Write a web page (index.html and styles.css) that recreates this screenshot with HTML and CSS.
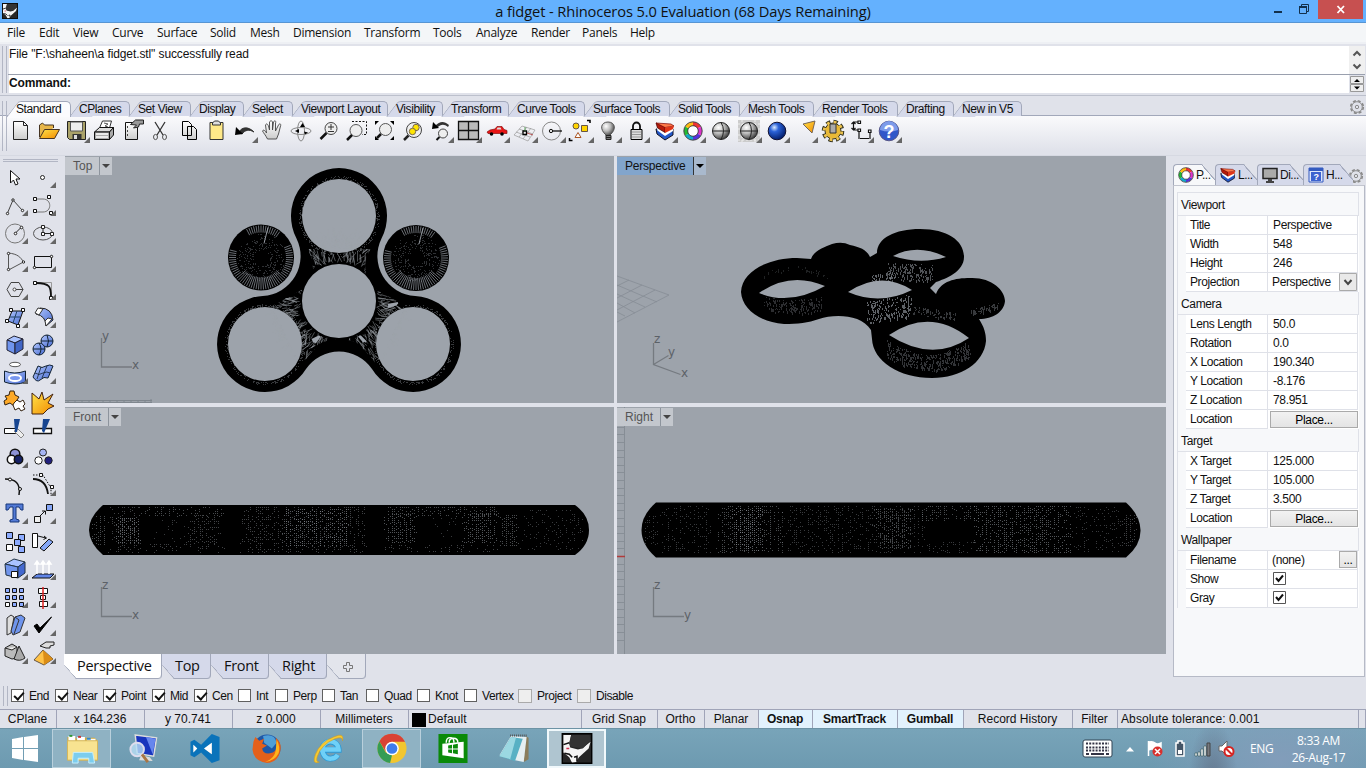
FILE: index.html
```html
<!DOCTYPE html>
<html lang="en">
<head>
<meta charset="utf-8">
<title>a fidget - Rhinoceros 5.0 Evaluation</title>
<link rel="stylesheet" href="styles.css">
</head>
<body>
<svg class="defs" width="0" height="0">
<defs>
<linearGradient id="gy" x1="0" y1="0" x2="0" y2="1"><stop offset="0" stop-color="#fff"/><stop offset="1" stop-color="#ccc"/></linearGradient>
<linearGradient id="bl" x1="0" y1="0" x2="1" y2="1"><stop offset="0" stop-color="#b4c9ff"/><stop offset="1" stop-color="#4468cf"/></linearGradient>
<linearGradient id="or" x1="0" y1="0" x2="1" y2="1"><stop offset="0" stop-color="#ffe34a"/><stop offset="1" stop-color="#f28a00"/></linearGradient>
<radialGradient id="ball" cx=".35" cy=".3" r=".7"><stop offset="0" stop-color="#fff"/><stop offset=".5" stop-color="#bbb"/><stop offset="1" stop-color="#444"/></radialGradient>
<radialGradient id="blue" cx=".35" cy=".3" r=".7"><stop offset="0" stop-color="#d9eaff"/><stop offset=".35" stop-color="#2b62d8"/><stop offset="1" stop-color="#04206f"/></radialGradient>
<symbol id="wheel" viewBox="0 0 20 20"><g fill="none" stroke-width="4"><path stroke="#e33" d="M10 3A7 7 0 0 1 16 6.5"/><path stroke="#d3c" d="M16 6.5A7 7 0 0 1 16 13.5"/><path stroke="#53d" d="M16 13.5A7 7 0 0 1 10 17"/><path stroke="#1ac" d="M10 17A7 7 0 0 1 4 13.5"/><path stroke="#2b3" d="M4 13.5A7 7 0 0 1 4 6.5"/><path stroke="#fb1" d="M4 6.5A7 7 0 0 1 10 3"/></g><g fill="none" stroke="#333" stroke-width=".9"><circle cx="10" cy="10" r="9.2"/><circle cx="10" cy="10" r="5.3" fill="#fff"/></g></symbol>
<symbol id="layer" viewBox="0 0 20 20"><path d="M1 8l1 5 8 6 8-5V8z" fill="#2458c8" stroke="#112"/><path d="M1.500 6l1 3.500L10 15l8-5V7z" fill="#fff"/><path d="M1 2l1.500 5L10 11.500V6z" fill="#b51a0a" stroke="#400" stroke-width=".7"/><path d="M1 2l9 4.500L19 5l-3-2z" fill="#ff7b4a" stroke="#700" stroke-width=".7"/><path d="M10 6.500L19 5l-1 3-8 4z" fill="#e03517"/></symbol>
<symbol id="gear" viewBox="0 0 16 16"><g fill="none" stroke="#8a8a8a"><circle cx="8" cy="8" r="6.3" stroke-width="1.6" stroke-dasharray="3 1.95"/><circle cx="8" cy="8" r="5.3"/><circle cx="8" cy="8" r="1.7"/></g></symbol>
<symbol id="rhino" viewBox="0 0 32 32"><path d="M0 0h32v32H0z" fill="#262626"/><path d="M2 2h8l-2 9 1 4 8 2 4-1 9-7-2 7-10 9-3 5-4 1-3-6-6-5z" fill="#f4f4f4"/><path d="M10 2h19l1 6-8 8-6-1-7-1-1-4z" fill="#333"/><path d="M2 12l6-2M3 21l5 1 3 3M13 25l3-1v5" fill="none" stroke="#111" stroke-width="1.600"/><path d="M5 16h3" stroke="#d03050" stroke-width="1.500"/><path d="M.7.7h30.6v30.6H.7z" fill="none" stroke="#000" stroke-width="1.5"/></symbol>
</defs>
</svg>
<div class="window">
<header class="titlebar">
  <svg class="appicon" viewBox="0 0 32 32"><use href="#rhino"/></svg>
  <h1>a fidget - Rhinoceros 5.0 Evaluation (68 Days Remaining)</h1>
  <div class="winbtns"><svg width="64" height="22"><path d="M4 12h8" stroke="#12304c" stroke-width="2"/><path d="M29.5 6.500h7v7h-7zM31.500 6v-1.500h7v7h-1.500" fill="none" stroke="#12304c"/><path d="M29 7h8" stroke="#12304c" stroke-width="2"/></svg><span class="close"><svg width="44" height="19"><path d="M19.500 6l6.500 7M26 6l-6.500 7" stroke="#fff" stroke-width="1.800"/></svg></span></div>
</header>
<nav class="menu"><span>File</span><span>Edit</span><span>View</span><span>Curve</span><span>Surface</span><span>Solid</span><span>Mesh</span><span>Dimension</span><span>Transform</span><span>Tools</span><span>Analyze</span><span>Render</span><span>Panels</span><span>Help</span></nav>
<section class="command">
  <div class="lines"><div class="history">File "F:\shaheen\a fidget.stl" successfully read</div><div class="prompt">Command:</div></div>
  <svg class="cmdscroll" width="16" height="48"><path d="M0 0h16v28H0z" fill="#f0f0f0"/><path d="M4.500 9.500l3.500-3.500 3.500 3.500M4.500 18.500l3.500 3.500 3.500-3.500" fill="none" stroke="#555" stroke-width="2"/><path d="M0 28.500h16" stroke="#9aa0ae"/><path d="M1.500 30.500h13v7h-13zM1.500 38.500h13v7h-13z" fill="#eee" stroke="#999"/><path d="M5 36h6l-3-3zM5 40.500h6l-3 3z"/></svg>
</section>
<section class="tooltabs">
  <div class="tabs">
  <span class="tab on"><b>Standard</b></span><span class="tab"><b>CPlanes</b></span><span class="tab"><b>Set View</b></span><span class="tab"><b>Display</b></span><span class="tab"><b>Select</b></span><span class="tab"><b>Viewport Layout</b></span><span class="tab"><b>Visibility</b></span><span class="tab"><b>Transform</b></span><span class="tab"><b>Curve Tools</b></span><span class="tab"><b>Surface Tools</b></span><span class="tab"><b>Solid Tools</b></span><span class="tab"><b>Mesh Tools</b></span><span class="tab"><b>Render Tools</b></span><span class="tab"><b>Drafting</b></span><span class="tab"><b>New in V5</b></span>
  </div>
  <svg class="gear" width="16" height="16"><use href="#gear"/></svg>
</section>
<section class="toolbar">
<i><svg><path d="M7.500 3.500h10l4 4v14h-14z" fill="url(#gy)" stroke="#222"/><path d="M17.500 3.500v4h4" fill="none" stroke="#222"/></svg></i>
<i><svg><path d="M5.500 19V7l3-2 2 2h9v3" fill="#e7b64a" stroke="#432"/><path d="M5.500 20.500l5-9h15l-5 9z" fill="url(#or)" stroke="#432"/></svg></i>
<i class="m"><svg><path d="M5.500 3.500h18v18h-16l-2-2z" fill="#aaa269" stroke="#222"/><path d="M8.500 4h12v9h-12z" fill="#eee" stroke="#555"/><path d="M10.500 16h9v5h-9z" fill="#333"/><path d="M12 17h3v4h-3z" fill="#ddd"/></svg></i>
<i><svg><path d="M9.500 10l3-7h9l-2 7" fill="#fff" stroke="#333"/><path d="M14 5l4 1-3 2 3 1" fill="none" stroke="#555"/><path d="M4.500 14l5-4.500h14l-4 4.500z" fill="#ddd" stroke="#111"/><path d="M4.500 14h15v7.500h-15zM19.500 14l4-4.500v7.500l-4 4.500z" fill="#aaa" stroke="#111"/><path d="M6 16h12M6 19h12" stroke="#fff" stroke-width="1.300"/></svg></i>
<i><svg><path d="M7.500 4.500h12v17h-12z" fill="url(#gy)" stroke="#111"/><path d="M9 9h1M9 13h1M9 17h1" stroke="#111" stroke-width="1.500"/><path d="M12.500 6.500l5-4.500h8v4h-4l-1 3-5 1 3-3z" fill="#999" stroke="#222"/></svg></i>
<i><svg fill="none"><path d="M9 4l8 13M19 4l-8 13" stroke="#333" stroke-width="1.300"/><ellipse cx="9.500" cy="19" rx="2" ry="2.600" stroke="#555"/><ellipse cx="18.500" cy="19" rx="2" ry="2.600" stroke="#555"/></svg></i>
<i><svg><path d="M8.500 3.500h6l3 3v11h-9zM13.500 8.500h6l3 3v10h-9z" fill="url(#gy)" stroke="#000"/></svg></i>
<i><svg><path d="M8 4.500h13v17H8z" fill="#ffe989" stroke="#333"/><path d="M10.500 5l2-2h4l2 2v2h-8z" fill="#ddd" stroke="#333"/></svg></i>
<i class="m"><svg><path d="M9 14c3-5 9-6 15 0-5-3-9-2-12 2z" fill="#333" stroke="#333"/><path d="M5 17l1-8 7 7z"/></svg></i>
<i><svg><path d="M9.500 21c-2-4-4-6-5-8 1-2 3 0 4 2L7.500 7c1-2 2-1 3 1l1 4V4c1-2 3-1 3 0v8l1-8c1-2 3-1 2 1v8l3-6c1-2 3-1 2 1l-2 8-2 5z" fill="url(#gy)" stroke="#444" stroke-width=".9"/></svg></i>
<i><svg fill="none" stroke="#888"><ellipse cx="15" cy="13" rx="10" ry="3.500"/><ellipse cx="15" cy="13" rx="3.500" ry="10"/><path d="M14 9h5l-2.500-4zM13 11v4l-4-2zM18 13.500l4 1-3 2z" fill="#000" stroke="none"/></svg></i>
<i><svg><circle cx="17" cy="10.500" r="6" fill="#eee" stroke="#444"/><path d="M14 9h6M17 6v6M14 13.500h6" stroke="#333"/><path d="M12.500 15L6.500 21" stroke="#111" stroke-width="2.500"/></svg></i>
<i><svg><path d="M10 3.500h14.500v13H20" fill="none" stroke="#111" stroke-dasharray="2 1.500"/><circle cx="14" cy="12.500" r="6" fill="#eeec" stroke="#555"/><path d="M10 17l-5 5" stroke="#111" stroke-width="2.500"/></svg></i>
<i><svg><path d="M5 7V3h4zM20 3h4v4zM5 18v4h4zM20 22h4v-4z"/><circle cx="15.500" cy="11.500" r="6" fill="#eee" stroke="#555"/><path d="M11 16l-4 4" stroke="#111" stroke-width="2.500"/></svg></i>
<i><svg><circle cx="16" cy="12" r="7.500" fill="#eee" stroke="#444"/><circle cx="18" cy="9.500" r="3.200" fill="#ffe500" stroke="#765"/><circle cx="14.500" cy="13.500" r="3.200" fill="#ffe500" stroke="#765"/><path d="M10.500 17.500L6 22" stroke="#222" stroke-width="2.500"/></svg></i>
<i class="m"><svg><path d="M9 8c5-5 9-5 14-1l-1 2c-4-3-7-3-11 1z" fill="#333"/><path d="M6 11l1-7 6 6z"/><circle cx="17" cy="15.500" r="4.500" fill="#eee" stroke="#444"/><path d="M13.500 19l-3 3" stroke="#111" stroke-width="2"/></svg></i>
<i class="m"><svg><path d="M4.500 3.500h20v18h-20zM4.500 12.500h20M14.500 4v18" fill="#bbb" stroke="#111" stroke-width="1.300"/></svg></i>
<i class="m"><svg><path d="M5 14l3-2 5-1 2-2.500h5l2 3 3 1v3H6z" fill="#e81414" stroke="#811" stroke-width=".7"/><circle cx="9.500" cy="16" r="1.800"/><circle cx="20" cy="16" r="1.800"/><path d="M15.500 9.500h3l1 2h-5z" fill="#ddd"/></svg></i>
<i class="m"><svg fill="none" stroke="#999" stroke-width=".7"><path d="M4 17l8-9 13 4-7 11zM6 14l14 5M9 11l14 5M9 19l8-10M13 21l8-11"/><path d="M13 13h3.500v3.500H13z" fill="#eee" stroke="#000" stroke-width="1.300"/><path d="M17 15l6 2" stroke="#a22"/><path d="M15 13V9" stroke="#282"/></svg></i>
<i class="m"><svg><circle cx="13.500" cy="13" r="9" fill="none" stroke="#888"/><circle cx="13" cy="13" r="1.700" fill="#ddd" stroke="#111"/><path d="M15 13h9" stroke="#111" stroke-width="1.300"/></svg></i>
<i class="m"><svg><circle cx="10" cy="8" r="3" fill="#ffd400" stroke="#654"/><path d="M15.500 7.500h6v6h-6z" fill="#ffd400" stroke="#654"/><path d="M9 19.500l3-5 3 5z" fill="#fff" stroke="#a52"/><path d="M21 2.500h3V5M6.500 22.500h-3V20" fill="none" stroke="#000" stroke-width="1.500"/></svg></i>
<i class="m"><svg><path d="M12 17c-7-6-5-13 2-13s9 7 2 13v1h-4z" fill="url(#ball)" stroke="#555"/><path d="M12 17.500h5v4h-5zM12 19.500h5" fill="#777" stroke="#222"/></svg></i>
<i class="m"><svg><path d="M11 12V8a3.500 3.500 0 0 1 7 0v4" fill="none" stroke="#111" stroke-width="1.800"/><path d="M9 11.500h11v10H9z" fill="#ddd" stroke="#000"/><path d="M10 14h9M10 16.500h9M10 19h9" stroke="#999"/></svg></i>
<i class="m"><svg><use href="#layer" x="5" y="3" width="20" height="20"/></svg></i>
<i class="m"><svg><use href="#wheel" x="5" y="3" width="20" height="20"/></svg></i>
<i><svg><circle cx="15" cy="13" r="8.500" fill="url(#ball)" stroke="#222"/><path d="M6.500 13h17M15 4.500q5 8 0 17" fill="none" stroke="#222"/></svg></i>
<i class="m"><svg><path d="M4 2h22v22H4z" fill="#ccc"/><path d="M4 6h22M4 11h22M4 17h22M4 22h22M8 2v22M21 2v22" stroke="#eee" stroke-dasharray="2 2"/><circle cx="15" cy="13" r="8.500" fill="url(#ball)" stroke="#222"/><path d="M6.500 13h17M15 4.500q5 8 0 17" fill="none" stroke="#222"/></svg></i>
<i class="m"><svg><circle cx="15" cy="13" r="8.800" fill="url(#blue)" stroke="#113"/></svg></i>
<i class="m"><svg><path d="M13 6l12-3-3 12z" fill="url(#or)" stroke="#765"/></svg></i>
<i class="m"><svg><circle cx="15" cy="13" r="9.500" fill="none" stroke="#332" stroke-width="3.600" stroke-dasharray="4.300 3.200"/><circle cx="15" cy="13" r="8" fill="#e9b936" stroke="#332"/><circle cx="15" cy="13" r="8.800" fill="none" stroke="#edc24c" stroke-width="3" stroke-dasharray="2.700 4.210" stroke-dashoffset="-.5"/><path d="M12 6h6v9h-6z" fill="#aaa" stroke="#333"/></svg></i>
<i class="m"><svg fill="none" stroke="#111" stroke-width="1.200"><path d="M7 4h6M7 12h6M7.500 5v7M13 12v9M24 14v7M14 20.500h9M5.500 6l2-2 2 2M5.500 10l2 2 2-2"/><path d="M12 3h2.500v2.500H12zM12 11h2.500v2.500H12zM22.500 12H25v2.500h-2.500z" fill="#fff"/></svg></i>
<i class="m"><svg><circle cx="15" cy="13" r="9.800" fill="#3157c9" stroke="#558"/><path d="M6 12a9 9 0 0 1 18 0q-9 3-18 0z" fill="#7d9bea"/><text x="15" y="19.500" class="help">?</text></svg></i>
</section>
<main class="work">
<aside class="tools">
<i><svg><path d="M10.500 7.500v12.500l3-3 2 5 2.500-1-2-5h4z" fill="#fff" stroke="#111"/></svg></i>
<i class="m"><svg><circle cx="14.500" cy="14.500" r="2" fill="#fff" stroke="#222"/></svg></i>
<i class="m"><svg fill="#fff" stroke="#222"><path d="M7.500 22L13 9l9 10" fill="none" stroke="#444"/><circle cx="7.500" cy="22.500" r="1.200"/><circle cx="13" cy="9" r="1.200"/><circle cx="22.500" cy="19.500" r="1.200"/></svg></i>
<i class="m"><svg fill="#fff" stroke="#111"><path d="M8 8h7c9 0 9 13 0 13H8" fill="none" stroke="#777"/><path d="M5.500 6.500h3v3h-3zM19.500 4.500h3v3h-3zM5.500 18.500h3v3h-3zM21.500 20.500h3v3h-3z"/></svg></i>
<i class="m"><svg fill="#fff" stroke="#222"><circle cx="15" cy="14.500" r="9.500" fill="none" stroke="#777"/><path d="M15.500 14l6-6"/><circle cx="15.500" cy="14.500" r="1.300"/><circle cx="21.500" cy="8.500" r="1.300"/></svg></i>
<i class="m"><svg fill="#fff" stroke="#222"><ellipse cx="15" cy="14.500" rx="9.500" ry="6.500" fill="none" stroke="#555"/><path d="M15 14V8M15 14.500h9"/><path d="M13.500 6.500h3v3h-3zM13.500 13.500h3v3h-3zM22.500 13.500h3v3h-3z"/></svg></i>
<i class="m"><svg fill="#fff" stroke="#222"><path d="M8.500 6c9 1 12 4 15 9L8.500 23z" fill="none" stroke="#555"/><circle cx="8.500" cy="6.500" r="1.200"/><circle cx="23.500" cy="15" r="1.200"/><circle cx="8.500" cy="22.500" r="1.200"/></svg></i>
<i class="m"><svg fill="#fff" stroke="#111"><path d="M6.500 9.500h17v11h-17z" fill="none"/><circle cx="23.500" cy="9.500" r="1.200"/><circle cx="6.500" cy="20.500" r="1.200"/></svg></i>
<i class="m"><svg fill="#fff" stroke="#444"><path d="M11 7.500h8l4 7-4 7h-8l-4-7z" fill="none"/><path d="M15 14.500h8"/><circle cx="14.500" cy="14.500" r="1.500"/></svg></i>
<i class="m"><svg fill="#fff" stroke="#111"><path d="M9 7.500h14.500V22" fill="none" stroke="#999"/><path d="M8 8c14 0 15 4 15 14" fill="none" stroke-width="1.800"/><path d="M5.500 6.500h3v3h-3zM21.500 21.500h3v3h-3z"/></svg></i>
<i class="m"><svg fill="#fff" stroke="#111"><path d="M12 8h11l-5 14-10-4z" fill="url(#bl)"/><path d="M10 14h10M17 8l-4 12" stroke="#246"/><path d="M9.500 5.500h3v3h-3zM21.500 5.500h3v3h-3zM5.500 16.500h3v3h-3zM16.500 21.500h3v3h-3z"/></svg></i>
<i class="m"><svg><path d="M12 5q12 0 13 12l-7 6q0-10-10-12z" fill="url(#bl)" stroke="#222"/><path d="M10 5l5 1-4 6-4-2zM20 15l4 1-6 7-1-5z" fill="#fff" stroke="#333"/></svg></i>
<i class="m"><svg stroke="#223"><path d="M7 9l7-4 9 3-8 4z" fill="#a9c2ff"/><path d="M7 9l8 3v11l-8-4z" fill="#6f94ee"/><path d="M15 12l8-4v10l-8 5z" fill="#4165c5"/></svg></i>
<i class="m"><svg stroke="#123"><circle cx="19" cy="10" r="6" fill="url(#bl)"/><circle cx="11" cy="18" r="6" fill="url(#bl)"/><path d="M5 18h12M11 12q4 6 0 12M13 10h12M19 4q3 6 0 12" fill="none"/></svg></i>
<i class="m"><svg><ellipse cx="15" cy="5.500" rx="5.500" ry="2.200" fill="#fff" stroke="#555"/><path d="M4.500 12q10 4 21 0v11q-10 4-21 0z" fill="url(#bl)" stroke="#123"/><ellipse cx="15" cy="19" rx="6" ry="3" fill="#7897f0" stroke="#fff" stroke-width="2"/></svg></i>
<i class="m"><svg><path d="M5 18l5-11q4 3 8 0 4-2 7 0l-5 12q-4-2-8 2-3 3-7-3z" fill="url(#bl)" stroke="#123"/><path d="M7 14q4 3 8 0 4-2 7 0M13 8L9 20M19 7l-5 12" fill="none" stroke="#123" stroke-width=".8"/></svg></i>
<i><svg stroke="#321"><path d="M5 9l4-1 1-4h4l1 4 4 2-2 3 2 2-5 4-4-3-5 2-1-4 3-2z" fill="#fda927"/><path d="M14 16l3-3 3 2 3-2 2 4-2 2 2 3-4 2-2-3-4 2-2-5z" fill="#fff"/></svg></i>
<i><svg><path d="M4 6l7 6 3-7 2 8 9-6-5 9 6 3-6 3-5 5H4z" fill="url(#or)" stroke="#421"/></svg></i>
<i><svg><path d="M4.500 13.500h11v5h-11z" fill="#fff" stroke="#111"/><path d="M14 16l4-2 6 6-3 3z" fill="#eee" stroke="#888"/><path d="M14 4h6l-3 13h-2z" fill="#174590"/></svg></i>
<i><svg><path d="M5.500 13.500h18v5h-18z" fill="#fff" stroke="#111" stroke-width="1.300"/><path d="M15 4h7l-6 14-2-2z" fill="#174590"/></svg></i>
<i class="m"><svg stroke="#111" stroke-width="1.500"><circle cx="15" cy="11" r="4.800" fill="#8e93d6"/><circle cx="11.500" cy="16.500" r="4.200" fill="#fff"/><circle cx="18.500" cy="16.500" r="4.200" fill="#172266"/></svg></i>
<i><svg stroke="#222"><circle cx="15" cy="9.500" r="3.500" fill="#a5b4f4"/><circle cx="10.500" cy="17.500" r="3.700" fill="#fff"/><circle cx="20.500" cy="17.500" r="3.700" fill="#201f7c"/></svg></i>
<i><svg fill="#fff" stroke="#111"><path d="M5 8c10 0 16 4 14 16" fill="none" stroke-width="1.500"/><circle cx="10" cy="8.500" r="1.500"/><circle cx="20" cy="18" r="1.500"/></svg></i>
<i class="m"><svg fill="#fff" stroke="#111"><path d="M5 4h10l8 13v7" fill="none" stroke-dasharray="1.500 1.500"/><path d="M5 8q13 0 15 15" fill="none" stroke-width="1.800"/><path d="M11.500 2.500h3v3h-3zM22.500 14.500h3v3h-3z"/></svg></i>
<i class="m"><svg><path d="M6 5h17v6h-2l-2-3h-3v12l3 1v2h-9v-2l3-1V8h-3l-2 3H6z" fill="#537ad6" stroke="#173678"/></svg></i>
<i class="m"><svg stroke="#111"><path d="M6.500 17.500h6v6h-6z" fill="#eee"/><path d="M18.500 5.500h6v6h-6z" fill="#86a6f6"/><path d="M12 17l5-5M14 12h3.500v3.500" fill="none"/></svg></i>
<i><svg stroke="#111"><path d="M6.500 5.500h6v6h-6zM18.500 7.500h6v6h-6z" fill="#8cabff"/><path d="M14.500 12.500h6v6h-6zM18.500 19.500h6v6h-6z" fill="#8cabff"/><path d="M6.500 17.500h6v6h-6z" fill="#fff"/></svg></i>
<i><svg stroke="#111"><path d="M4.500 6.500h5v14h-5z" fill="#fff"/><path d="M12 21l9-9 4 3-9 9z" fill="#85a7f7"/><path d="M10 9l8 2M16 9l2.500 2-3 1.500" fill="none"/></svg></i>
<i class="m"><svg stroke="#234"><path d="M5 9l9-5 11 3-7 5z" fill="#a9c2ff"/><path d="M5 9l13 3v11L6 20z" fill="#7094eb"/><path d="M18 12l7-5v11l-7 5z" fill="#4469cf"/><path d="M11.500 16.500h6v6h-6z" fill="#fff" stroke="#111"/></svg></i>
<i class="m"><svg><path d="M4 23l5-4h17l-4 4z" fill="#6085e8" stroke="#111"/><path d="M9 19V9M15 19V9M21 19V9M7 9h4L9 6zM13 9h4l-2-3zM19 9h4l-2-3z" fill="#fff" stroke="#fff" stroke-width="1.500"/></svg></i>
<i class="m"><svg fill="#8baaff" stroke="#111"><path d="M5.500 5.500h4v4h-4zM12.500 5.500h4v4h-4zM19.500 5.500h4v4h-4zM5.500 12.500h4v4h-4zM12.500 12.500h4v4h-4zM19.500 12.500h4v4h-4zM12.500 19.500h4v4h-4zM19.500 19.500h4v4h-4z"/><path d="M5.500 19.500h4v4h-4z" fill="#fff"/></svg></i>
<i class="m"><svg fill="#fff" stroke="#111"><path d="M10.500 5.500h9v5h-9zM12.500 12.500h5v4h-5zM11.500 18.500h8v5h-8z"/><path d="M15 4v22" stroke="#d22" stroke-width="1.500"/></svg></i>
<i class="m"><svg stroke="#333"><path d="M7 7l4-3 3 2-3 16-4 2z" fill="#ddd"/><path d="M15 6l6-2 4 3-5 14-7 3-2-4z" fill="#6f95ed"/><path d="M15 6l4 3-5 14" fill="none"/></svg></i>
<i class="m"><svg><path d="M6 15l5 7L23.500 6 12 17l-3-4z" stroke="#000"/></svg></i>
<i class="m"><svg stroke="#222"><path d="M5 9l7-4 5 3v11l-5 1-7-3z" fill="#bbb"/><path d="M5 9l7 2 5-3" fill="#eee"/><path d="M19 7l6 12q-5 4-11 1z" fill="#aaa"/></svg></i>
<i class="m"><svg><path d="M6 21l9-10 10 9-9 6z" fill="#ffc247" stroke="#654"/><path d="M15 11l1 15 9-6z" fill="#db8d16"/><path d="M12 7l6-4h8v3l-4 1v2h-4z" fill="#ddd" stroke="#222"/></svg></i>
</aside>
<section class="center">
<div class="views">
<div class="view top"><svg class="scene" viewBox="65 156 549 247"><path d="M65 400.500h87M65 402.500h87M68 400v3M75 400v3M82 400v3M89 400v3M96 400v3M103 400v3M110 400v3M117 400v3M124 400v3M131 400v3M138 400v3M145 400v3M151 399v4" stroke="#7f868e"/>
<defs><clipPath id="web"><path clip-rule="evenodd" d="M307 249A30 30 0 0 1 303 289L272 306 300 366 319 344Q339 334 359 344L378 366 406 306 375 289A30 30 0 0 1 371 249ZM302 216a37 37 0 1 0 74 0a37 37 0 1 0-74 0ZM302 301a37 37 0 1 0 74 0a37 37 0 1 0-74 0ZM228 344a37 37 0 1 0 74 0a37 37 0 1 0-74 0ZM376 344a37 37 0 1 0 74 0a37 37 0 1 0-74 0Z"/></clipPath></defs>
<path fill-rule="evenodd" d="M296.500 238.400A48 48 0 1 1 381.500 238.400A40 40 0 0 0 415.200 296A48 48 0 1 1 372 369A40 40 0 0 0 306 369A48 48 0 1 1 262.800 296A40 40 0 0 0 296.500 238.400ZM302 216a37 37 0 1 0 74 0a37 37 0 1 0-74 0ZM302 301a37 37 0 1 0 74 0a37 37 0 1 0-74 0ZM228 344a37 37 0 1 0 74 0a37 37 0 1 0-74 0ZM376 344a37 37 0 1 0 74 0a37 37 0 1 0-74 0Z"/><circle cx="261" cy="257.500" r="33"/><circle cx="416" cy="258" r="33"/><g id="topmesh" class="mesh"></g>
<path class="axis" d="M101.500 338v29H132"/><text class="ax" x="102" y="340">y</text><text class="ax" x="132" y="369">x</text></svg><div class="vt"><span>Top</span><em></em></div></div>
<div class="view persp"><svg class="scene" viewBox="617 156 549 247"><path d="M617 276l52 19-52 27M617 285l40 17M617 294l28 13M617 303l18 10M617 312l8 4M629 280l-12 6M642 285l-25 13M655 290l-38 20" fill="none" stroke="#868d95" stroke-width=".8"/>
<path fill-rule="evenodd" d="M741 292C742 270 770 258 797 258L811 259C814 250 825 247 832 244Q842 241 850 245C860 247 867 250 870 257L877 253C877 238 895 229 920 229C948 229 964 241 964 257C964 272 945 279 936 282L930 288L936 294C941 281 955 278 970 278C991 277 1005 290 1005 301C1004 312 993 319 979 319C984 327 986 333 986 341C984 363 961 378 932 378C899 378 873 361 872 339L871 330C861 314 834 314 819 319C808 323 798 324 784 324C758 322 742 308 741 292ZM759 293Q790 271 825 286Q790 306 759 293ZM848 292Q881 270 912 290Q880 306 848 292ZM893 256Q917 243 946 257Q920 265 893 256ZM889 335Q930 307 969 338Q932 363 889 335Z"/><g id="perspmesh" class="mesh"></g>
<path class="axis" d="M653.500 343v21.500l27 10M653.500 364.500l15-9"/><text class="ax" x="654" y="343">z</text><text class="ax" x="668" y="356">y</text><text class="ax" x="681" y="377">x</text></svg><div class="vt"><span>Perspective</span><em></em></div></div>
<div class="view front"><svg class="scene" viewBox="65 407 549 247"><path d="M103 505H575Q589 515 589 530T575 555H103Q89 543 89 530T103 505Z"/><g id="frontmesh" class="mesh"></g><path class="axis" d="M101.500 587v29.500H132"/><text class="ax" x="102" y="589">z</text><text class="ax" x="132" y="619">x</text></svg><div class="vt"><span>Front</span><em></em></div></div>
<div class="view right"><svg class="scene" viewBox="617 407 549 247"><path d="M624.500 407v247" stroke="#868d95"/><path d="M617 419.500h7M617 427.500h7M617 434.500h7M617 442.500h7M617 450.500h7M617 457.500h7M617 465.500h7M617 472.500h7M617 480.500h7M617 488.500h7M617 495.500h7M617 503.500h7M617 510.500h7M617 518.500h7M617 526.500h7M617 533.500h7M617 541.500h7M617 548.500h7M617 564.500h7M617 571.500h7M617 579.500h7M617 586.500h7M617 594.500h7M617 602.500h7M617 609.500h7M617 617.500h7M617 624.500h7M617 632.500h7M617 640.500h7" stroke="#888f97"/><path d="M617 556.500h8" stroke="#b03c3c" stroke-width="1.500"/><path d="M656 502.500H1126Q1140 515 1140.500 530T1126 557.500H656Q641.500 545 641.500 530T656 502.500Z"/><g id="rightmesh" class="mesh"></g><path class="axis" d="M653.500 587v29.500H684"/><text class="ax" x="654" y="589">z</text><text class="ax" x="684" y="619">y</text></svg><div class="vt"><span>Right</span><em></em></div></div>
</div>
<div class="viewtabs"><span class="vtab on"><b>Perspective</b></span><span class="vtab"><b>Top</b></span><span class="vtab"><b>Front</b></span><span class="vtab"><b>Right</b></span><span class="vtab add"><b><svg width="10" height="10"><path d="M3.500.500h3v3h3v3h-3v3h-3v-3h-3v-3h3z" fill="none" stroke="#777"/></svg></b></span></div>
</section>
<aside class="panel">
<div class="ptabs"><span class="on"><svg width="16" height="16"><use href="#wheel"/></svg>P...</span><span><svg width="16" height="16"><use href="#layer"/></svg>L...</span><span><svg width="16" height="16"><path d="M1 1.500h14v10H1z" fill="#aaa" stroke="#222" stroke-width="1.500"/><path d="M6 12h4v2h2v2H4v-2h2z" fill="#444"/></svg>Di...</span><span><svg width="16" height="16"><path d="M1 1h14v14H1z" fill="#dde6fa" stroke="#345bc0"/><path d="M1 1h14v3H1z" fill="#345bc0"/><path d="M3 5h10v9H3z" fill="#3c62cf"/><text x="8" y="13" class="qs">?</text></svg>H...</span><svg class="gear" width="16" height="16"><use href="#gear"/></svg></div>
<div class="pbody"><div class="props">
<h2>Viewport</h2>
<p><span>Title</span><b>Perspective</b></p><p><span>Width</span><b>548</b></p><p><span>Height</span><b>246</b></p><p><span>Projection</span><b class="combo">Perspective<svg width="18" height="18"><path d="M.500.500h17v17H.500z" fill="#e9e9e9" stroke="#aaa"/><path d="M5.500 7l3.500 4 3.500-4" fill="none" stroke="#444" stroke-width="2"/></svg></b></p>
<h2>Camera</h2>
<p><span>Lens Length</span><b>50.0</b></p><p><span>Rotation</span><b>0.0</b></p><p><span>X Location</span><b>190.340</b></p><p><span>Y Location</span><b>-8.176</b></p><p><span>Z Location</span><b>78.951</b></p><p><span>Location</span><button>Place...</button></p>
<h2>Target</h2>
<p><span>X Target</span><b>125.000</b></p><p><span>Y Target</span><b>105.000</b></p><p><span>Z Target</span><b>3.500</b></p><p><span>Location</span><button>Place...</button></p>
<h2>Wallpaper</h2>
<p><span>Filename</span><b class="combo">(none)<button class="dots">...</button></b></p><p><span>Show</span><b><svg class="cb" viewBox="0 0 13 13"><path d="M.500.500h12v12H.500z" fill="#fff" stroke="#555"/><path d="M3 6l2.500 3L10 3.500" fill="none" stroke="#111" stroke-width="2"/></svg></b></p><p><span>Gray</span><b><svg class="cb" viewBox="0 0 13 13"><path d="M.500.500h12v12H.500z" fill="#fff" stroke="#555"/><path d="M3 6l2.500 3L10 3.500" fill="none" stroke="#111" stroke-width="2"/></svg></b></p>
</div></div>
</aside>
</main>
<section class="osnap"><label class="c">End</label><label class="c">Near</label><label class="c">Point</label><label class="c">Mid</label><label class="c">Cen</label><label>Int</label><label>Perp</label><label>Tan</label><label>Quad</label><label>Knot</label><label>Vertex</label><label class="d">Project</label><label class="d">Disable</label></section>
<section class="status"><span>CPlane</span><span>x 164.236</span><span>y 70.741</span><span>z 0.000</span><span>Millimeters</span><span class="lay"><i></i>Default</span><span>Grid Snap</span><span>Ortho</span><span>Planar</span><span class="on">Osnap</span><span class="on">SmartTrack</span><span class="on">Gumball</span><span>Record History</span><span>Filter</span><span class="tol">Absolute tolerance: 0.001</span><span></span></section>
<footer class="taskbar">
<div class="start"><svg width="30" height="28" fill="#fff"><path d="M2 4l11-2v11H2zM14 2l14-2v13H14zM2 14h11v11L2 23zM14 14h14v13l-14-2z"/></svg></div>
<div class="app open"><svg viewBox="0 0 34 32"><path d="M2 4h8l2 3h6l2-2h10l3 3v20H2z" fill="#d3a836"/><path d="M3 3h7v6H3zM12 4h8v4h-8zM22 6h9v3h-9z" fill="#fff"/><path d="M4 2h3v2H4z" fill="#393"/><path d="M13 3h3v2h-3z" fill="#c33"/><path d="M22 5h4v2h-4z" fill="#38c"/><path d="M2 8h31v20H2z" fill="#f8e391" stroke="#d5b65a"/><path d="M7 31l1-11h20l2 11h-6v-5H13v5z" fill="#7ccdee" stroke="#c4efff"/></svg></div>
<div class="app"><svg viewBox="0 0 34 32"><path d="M9 2l22 3-3 19-17-3z" fill="#1935bd" stroke="#ddd" stroke-width="1.500"/><path d="M20 4l10 2-3 16z" fill="#6686ee"/><path d="M15 23l9 2 3 4-14-1z" fill="#ddd"/><circle cx="11" cy="17" r="7" fill="#b9def5cc" stroke="#dde" stroke-width="2"/><path d="M16 22l6 8" stroke="#a87645" stroke-width="3"/></svg></div>
<div class="app"><svg viewBox="0 0 34 32"><path fill-rule="evenodd" d="M24 1l8 3v24l-8 3-11-11-7 5-4-2V9l4-2 7 5zM5 12v8l4-4zM24 10l-8 6 8 6z" fill="#0a73ba"/><path d="M24 10l-8 6 8 6zM5 12v8l4-4z" fill="#fff"/></svg></div>
<div class="app"><svg viewBox="0 0 34 32"><circle cx="17" cy="15.500" r="14" fill="#1e57a7"/><path d="M13 3q12-3 14 7l-5 6-8-6z" fill="#4f9fd8"/><path d="M3 9l2-5 4 4 5-2-2 5 5 2-5 3q1 6 8 5 7-1 7-8l-1-8q6 5 5 12Q29 30 17 31 3 29 2 17z" fill="#e4601a"/><path d="M27 7q4 7 2 14-4 8-14 9 10-4 11-12z" fill="#ffb51c"/></svg></div>
<div class="app"><svg viewBox="0 0 34 32"><path d="M27 17.500H10A8.500 8.500 0 1 1 27 17.500zM10 18q2 9 9 8.500 5-.5 7-4" fill="none" stroke="#2a9ad8" stroke-width="6"/><path d="M27 17H10A8.500 8.500 0 1 1 27 17zM10 18q2 9 9 8.500 5-.5 7-4" fill="none" stroke="#6fd0f7" stroke-width="4.500"/><path d="M7 30Q-1 33 3 22 8 9 22 4q11-5 9 4 0-5-8-2Q9 12 5 24q-2 6 2 6z" fill="#f5ca33" stroke="#d79c18" stroke-width=".6"/></svg></div>
<div class="app open"><svg viewBox="0 0 34 32"><circle cx="17" cy="16" r="15" fill="#f2c62f"/><path d="M4 8.500A15 15 0 0 1 30.500 9H17l-6.500 10z" fill="#d94235"/><path d="M4 8.500L10.500 20 17 23l-2 8A15 15 0 0 1 4 8.500z" fill="#359c54"/><circle cx="17" cy="16" r="7" fill="#fff"/><circle cx="17" cy="16" r="5.500" fill="#3e7cec"/></svg></div>
<div class="app"><svg viewBox="0 0 34 32"><path d="M2 1h30v30H2z" fill="#0a8a08"/><path d="M6 11l22-2v17L6 23z" fill="#fff"/><path d="M10 10c0-7 8-7 8 0M13 10c0-6 9-6 9 0" fill="none" stroke="#fff" stroke-width="1.500"/><path d="M12 13l4-1v4h-4zM17 12l5-1v5h-5zM12 17h4v4l-4-1zM17 17h5v5l-5-1z" fill="#0a8a08"/></svg></div>
<div class="app"><svg viewBox="0 0 34 32"><path d="M28 3l3 2v22l-5 3z" fill="#8b7d5b"/><path d="M13 3l16 1-3 26-14-3-11-4z" fill="#e6eff1"/><path d="M13 4l12 2-8 23-16-5z" fill="#58b1c4"/><path d="M13 4l5 1-6 22-11-3z" fill="#9bd8e2"/><path d="M12 2.500h18" stroke="#555" stroke-width="2" stroke-dasharray="1 1"/></svg></div>
<div class="app active"><svg viewBox="0 0 32 32"><use href="#rhino"/></svg></div>
<div class="tray">
<svg width="31" height="20"><rect x="1" y="1" width="29" height="17" rx="2" fill="#fff" stroke="#345"/><path d="M4 4.500h23M4 8.500h23M4 11.500h23" stroke="#334" stroke-width="2" stroke-dasharray="2 1.200"/><path d="M4 15h3M9 15h13M24 15h3" stroke="#334" stroke-width="2"/></svg>
<svg width="10" height="8"><path d="M1 6.500h8L5 2z" fill="#fff"/></svg>
<svg width="18" height="18"><path d="M2.500 1v15M3 2q4-1 6 1t6 0v7q-3 2-6 0t-6 0z" fill="#fff" stroke="#fff" stroke-width="1.500"/><circle cx="11.500" cy="11.500" r="5" fill="#d92f2c"/><path d="M9 9l5 5M14 9l-5 5" stroke="#fff" stroke-width="1.500"/></svg>
<svg width="12" height="18"><path d="M4 1h4v2h2v13H2V3h2z" fill="#456" stroke="#fff" stroke-width="1.500"/><path d="M4 10h4v4H4z" fill="#fff"/></svg>
<svg width="18" height="16"><path d="M1 12h2v3H1zM4 11h2v4H4zM7 8h2v7H7zM10 5h2v10h-2z" fill="#fff" stroke="#355" stroke-width=".6"/><path d="M13 2h3v13h-3z" fill="#777a80" stroke="#444"/></svg>
<svg width="18" height="18"><path d="M1 6h3l5-5v15l-5-5H1z" fill="#fff" stroke="#666"/><circle cx="11" cy="11.500" r="4.500" fill="#fff" stroke="#d62421" stroke-width="2"/><path d="M8 8.500l6 6" stroke="#d62421" stroke-width="2"/></svg>
<span class="lang">ENG</span><div class="clock">8:33 AM<br>26-Aug-17</div>
</div>
</footer>
</div>
<script src="mesh.js"></script>
</body>
</html>
```
FILE: styles.css
```css
*{box-sizing:border-box}
body{margin:0;background:#e0e2ea;color:#111;font:12px "Liberation Sans",Arial,sans-serif;overflow:hidden}
.defs{position:absolute}
svg{display:block;flex:none}
b{font-weight:400}
.window{width:1366px;height:768px;display:grid;grid-template-rows:23px 19px 54px 20px 40px 526px 27px 19px 40px;white-space:nowrap}
.titlebar{background:#64b1fe;border-bottom:1px solid #5795d3;display:grid;grid-template-columns:200px 1fr 200px;align-items:start}
.appicon{width:16px;height:16px;margin:3px 0 0 2px}
.titlebar h1{margin:0;text-align:center;font:14.7px/23px "Open Sans","Noto Sans",sans-serif;letter-spacing:-.12px;padding-left:0}
.winbtns{display:flex;justify-content:flex-end;padding-right:3px}
.winbtns>svg{margin-right:-16px}
.close{background:#c75050;width:45px;height:19px}
.menu{background:#f4f6f8;display:grid;grid-template-columns:32px 34px 39px 45px 53px 40px 43px 71px 69px 43px 55px 51px 48px 50px;padding-left:7px;font:12px/20px "Open Sans","Noto Sans",sans-serif;letter-spacing:-.25px}
.command{display:flex;padding:4px 1px 2px 2px;border-bottom:1px solid #bcc0cc;background:linear-gradient(#eef0f4 0 2px,#e0e2ea 2px)}
.command::before,.tooltabs::before{content:"";width:5px;flex:none}
.command::before{width:3px;border:solid #b2b6c4;border-width:0 1px;margin-right:2px}
.lines{flex:1;background:#fff;height:47px}
.history{height:29px;border-bottom:1px solid #9aa0ae;line-height:16px;letter-spacing:-.1px;text-indent:1px}
.prompt{font-weight:700;line-height:17px;text-indent:1px;letter-spacing:-.1px}
.history,.prompt{margin-left:-1px;text-indent:1px}
.tooltabs{display:flex;background:#e0e2ea;border-bottom:1px solid #a2a8ba;position:relative;padding-top:5px}
.tooltabs::before{height:50px;width:3px;border:solid #b2b6c4;border-width:0 1px;margin:0 1px 0 2px;position:relative;z-index:4}
.tabs{display:grid;height:15px;grid-template-columns:63px 59px 61px 53px 49px 95px 55px 66px 76px 85px 70px 74px 84px 56px 68px}
.tab{position:relative;height:15px;z-index:1}
.tab::before{content:"";position:absolute;left:4px;top:0;width:22px;height:15px;background:#d5d9ea;border:solid #a2a8ba;border-width:1px 0 0 1px;border-radius:3px 0 0;transform:skewX(-37deg)}
.tab b{display:block;position:absolute;inset:0 0 0 14px;border:solid #a2a8ba;border-width:1px 1px 0 0;border-radius:0 5px 0 0;background:#d5d9ea;line-height:15px;letter-spacing:-.42px;text-indent:-6px}
.tab.on{z-index:3}
.tab.on::before,.tab.on b{background:#fbfbfd;height:16px}
.tab.on b{inset:0 0 -1px 14px}
.tooltabs .gear{position:absolute;right:1px;top:3px}
.toolbar{background:linear-gradient(#fafafc,#e0e2ea 90%);display:grid;grid-template-columns:repeat(32,28px);padding:2px 0 0 6px;border-bottom:1px solid #d6d9e2}
i{display:block;position:relative;width:28px;height:28px}
i svg{width:28px;height:28px;overflow:visible}
.m::after{content:"";position:absolute;right:0;bottom:3px;border:solid transparent;border-width:3px;border-right-color:#666;border-bottom-color:#666}
.help{font:700 18px "Liberation Sans",sans-serif;fill:#fff;text-anchor:middle}
.work{display:grid;grid-template-columns:64px 1103px 199px}
.tools{display:grid;grid-template-columns:28px 28px;grid-auto-rows:28px;padding-top:3px;align-content:start;border-top:0;background:linear-gradient(#b2b6c4,#b2b6c4) 3px 3px/55px 1px no-repeat,linear-gradient(#b2b6c4,#b2b6c4) 3px 5px/55px 1px no-repeat}
.tools i{margin-top:4px}
.views{display:grid;grid-template-columns:549px 549px;grid-template-rows:247px 247px;gap:4px 3px;padding-left:1px}
.view{background:#9da3ab;position:relative;height:247px}
.scene{position:absolute;inset:0;width:549px;height:247px}
.vt{position:relative;display:inline-flex;height:18px;margin-top:1px;background:#c3c7cd;color:#555;line-height:18px;padding-left:8px}
.vt em{width:13px;margin-left:7px;border-left:1px solid #8d949d;display:block;padding-top:7px}
.vt em::before{content:"";display:block;width:0;margin-left:2px;border:4px solid transparent;border-top-color:#444;border-bottom:0}
.persp .vt{background:#82a5cc;color:#111}
.persp .vt em{background:#a9b9cd;border-left-color:#333}
.persp .vt em::before{border-top-color:#000}
.persp .vt span{letter-spacing:-.2px}
.axis{fill:none;stroke:#757a80;stroke-width:1.3}
.ax{font:12px "DejaVu Sans",sans-serif;fill:#5c6167}
.mesh{fill:none;stroke:#9da3ab;stroke-width:1}
.viewtabs{display:grid;grid-template-columns:98px 49px 58px 58px 39px;font:14.5px/24px "Open Sans","Noto Sans",sans-serif;height:25px}
.vtab{height:25px;background:linear-gradient(to top right,#e0e2ea 47%,#a2a8ba 48% 53%,transparent 54%) 0 100%/12px 14px no-repeat,#d5d9ea;border:solid #a2a8ba;border-width:0 1px 0 0;border-radius:0 0 4px;padding-left:13px;letter-spacing:-.3px;box-shadow:inset 0 -1px #a2a8ba}
.vtab b{display:block}
.vtab{clip-path:polygon(0 0,100% 0,100% 100%,12px 100%,0 11px)}
.vtab.on{background-color:#fff}
.vtab.add{background-color:#e3e5ec}
.vtab.add svg{margin:8px 0 0 3px}
.panel{padding:8px 1px 5px 6px}
.ptabs{display:grid;grid-template-columns:42px 42px 46px 50px 16px;height:21px;margin-right:-4px}
.ptabs span{display:flex;align-items:center;gap:2px;padding:0 0 0 4px;background:linear-gradient(to top right,transparent 47%,#a2a8ba 48% 53%,#e0e2ea 54%) 100% 0/13px 15px no-repeat,#d5d9ea;border:solid #a2a8ba;border-width:1px 0 0 1px;border-radius:4px 0 0 0;letter-spacing:-.5px;clip-path:polygon(0 0,calc(100% - 13px) 0,100% 15px,100% 100%,0 100%)}
.ptabs .on{background-color:#f7f8fa}
.ptabs .gear{margin:4px 0 0 -5px}
.qs{font:700 9px "Liberation Sans",sans-serif;fill:#fff;text-anchor:middle}
.pbody{height:492px;background:#f7f8fa;border:1px solid #b6bac6;border-top-color:#c2c5cf;padding:6px 7px 0 3px}
.props{border:1px solid #dfe1e8;border-width:1px 0 0 1px;letter-spacing:-.42px;width:182px}
.props h2{font:12px/24px "Liberation Sans",Arial,sans-serif;height:23px;margin:0;padding-left:3px;letter-spacing:-.35px;border:solid #dfe1e8;border-width:0 1px 1px 0}
.props p{display:grid;grid-template-columns:82px 90px;margin:0 0 0 8px;height:19px;line-height:19px;background:#fff}
.props p>*{border:solid #dfe1e8;border-width:0 1px 1px 0;padding-left:4px;height:19px}
.props p>b{padding-left:5px;letter-spacing:-.35px}
.props p>.combo{display:flex;justify-content:space-between;padding-left:4px}
.props button{margin:1px 0 0 2px;height:17px;border:1px solid #aaa;background:linear-gradient(#f2f2f2,#e4e4e4);font:12px/14px "Liberation Sans",sans-serif;letter-spacing:-.3px;padding:0;width:88px}
.props .dots{width:18px;margin:0}
.cb{width:13px;height:13px;margin-top:2px}
.osnap{display:grid;grid-template-columns:44px 48px 49px 42px 44px 37px 47px 44px 51px 47px 54px 59px 60px;padding:7px 0 0 11px;letter-spacing:-.42px;position:relative}
.osnap::before{content:"";position:absolute;left:3px;top:4px;height:20px;width:3px;border:solid #b2b6c4;border-width:0 1px}
.osnap label{height:14px;line-height:14px;padding-left:18px;background:linear-gradient(#fff,#fff) 1px 1px/11px 11px no-repeat,linear-gradient(#606060,#606060) 0 0/13px 13px no-repeat;position:relative}
.osnap .d{background:linear-gradient(#eee,#eee) 1px 1px/12px 12px no-repeat,linear-gradient(#aaa,#aaa) 0 0/14px 14px no-repeat;padding-left:19px}
.osnap .c::after{content:"";position:absolute;left:5px;top:1px;width:4px;height:8px;border:solid #111;border-width:0 2px 2px 0;transform:rotate(42deg)}
.status{display:grid;grid-template-columns:57px 88px 88px 88px 88px 173px 76px 47px 54px 54px 85px 66px 109px 45px 241px 7px;border-top:1px solid #a0a4b8;line-height:18px;text-align:center}
.status span{border-right:1px solid #a0a4b8;height:18px;padding-right:1px}
.status .on{background:#e2f2fd;font-weight:700;letter-spacing:-.25px}
.status .lay,.status .tol{display:flex;text-align:left;padding-left:3px;letter-spacing:.1px}
.status i{width:14px;height:14px;background:#000;margin:3px 2px 0 0}
.taskbar{display:flex;background:radial-gradient(ellipse 25px 65px at 1213px 55px,#5a657aaa,transparent),radial-gradient(ellipse 130px 70px at 1280px 30px,#829dba,transparent),linear-gradient(#78a4b9,#6d9ab0);border-top:1px solid #6d93a5}
.start{width:50px;padding:6px 0 0 10px}
.app{width:62px;height:39px;padding:4px 14px 0;display:flex;justify-content:center}
.app svg{width:34px;height:31px}
.app.open,.app.active{width:59px;margin:0 1px 0 2px;padding-top:3px;border:1px solid #b9d0dc;background:#8fb2c3}
.app.active{background:#afc5d0;border-color:#f0f8fb;border-width:2px;margin-left:1px;padding-top:2px}
.tray{margin-left:auto;width:284px;display:grid;grid-template-columns:43px 21px 28px 20px 24px 32px 30px 1fr;align-items:center;color:#fff;font:12px/17px "Open Sans","Noto Sans",sans-serif;letter-spacing:-.35px}
.clock{text-align:center;padding-right:9px}
```
FILE: mesh.js
```js
// Draws the light gaps that show between the dense wireframe lines.
let seed = 11;
const rnd = () => (seed = (seed * 16807) % 2147483647) / 2147483647;
const add = (id, d, opacity, extra) => {
  const p = document.createElementNS("http://www.w3.org/2000/svg", "path");
  p.setAttribute("d", d);
  p.setAttribute("stroke-opacity", opacity);
  for (const k in extra || {}) p.setAttribute(k, extra[k]);
  document.getElementById(id).appendChild(p);
};
const crisp = { "shape-rendering": "crispEdges" };

// Arms: thin dotted rim just outside each bearing hole.
[[339, 216], [265, 344], [413, 344]].forEach(([cx, cy]) => {
  let d = "";
  for (let k = 0; k < 230; k++) {
    const a = rnd() * Math.PI * 2, r = 37.5 + rnd() * 3;
    d += `M${Math.round(cx + r * Math.cos(a))} ${Math.round(cy + r * Math.sin(a))}h1`;
  }
  add("topmesh", d, 0.35, crisp);
});

// Hub: slivers between triangles running from the central hole outwards.
let hub = "";
for (let k = 0; k < 850; k++) {
  const a = rnd() * Math.PI * 2, r = 38 + rnd() * 28, l = 3 + rnd() * 8;
  const t = a + (rnd() - 0.5) * 1.3;
  const x = 339 + r * Math.cos(a), y = 301 + r * Math.sin(a);
  hub += `M${x.toFixed(1)} ${y.toFixed(1)}l${(l * Math.cos(t)).toFixed(1)} ${(l * Math.sin(t)).toFixed(1)}`;
}
add("topmesh", hub, 0.75, { "clip-path": "url(#web)", "stroke-width": 0.65 });
add("topmesh", "M313 342l6-6M315 343l5-7M312 340l6-3M366 342l-6-6M364 342l-5-6M398 303l-10 2M397 304l-9 3", 1, { "stroke-width": 2 });

// Caps: radial spokes near the rim and a denser core.
[[261, 257.5], [416, 258]].forEach(([cx, cy]) => {
  let d = "";
  for (let k = 0; k < 80; k++) {
    const a = k * Math.PI / 40, deg = k * 4.5;
    if ((deg > 195 && deg < 240) || (deg > 310 && deg < 335)) continue;
    const r0 = deg > 40 && deg < 140 ? 20 : 25;
    d += `M${(cx + r0 * Math.cos(a)).toFixed(1)} ${(cy + r0 * Math.sin(a)).toFixed(1)}L${(cx + 32 * Math.cos(a)).toFixed(1)} ${(cy + 32 * Math.sin(a)).toFixed(1)}`;
  }
  add("topmesh", d, 0.75, { "stroke-width": 0.9 });
  add("topmesh", `M${cx + 3} ${cy - 14}L${cx + 7} ${cy - 30}`, 0.9);
  let s = "";
  for (let k = 0; k < 260; k++) {
    const a = rnd() * Math.PI * 2, r = 8 + rnd() * 16;
    s += `M${Math.round(cx + r * Math.cos(a))} ${Math.round(cy + r * Math.sin(a))}h1`;
  }
  add("topmesh", s, 0.3, crisp);
});

// Columns of short dashes for the edge-on views, thinning out irregularly.
function columns(id, x0, x1, y0, y1, density, opacity, step = 2) {
  let d = "";
  for (let x = x0; x < x1; x += step) {
    const edge = Math.min(1, (x - x0 + 3) / 9, (x1 - x + 3) / 9);
    const own = density * edge * (0.35 + 0.65 * Math.abs(Math.sin(x * 0.83)));
    for (let y = y0; y < y1; y += 2 + (x % 3 === 0 ? 1 : 0))
      if (rnd() < own) d += `M${x} ${y}.5h1`;
  }
  add(id, d, opacity, crisp);
}
columns("frontmesh", 92, 106, 516, 546, 0.95, 0.45);
columns("frontmesh", 108, 142, 507, 553, 0.5, 0.4);
columns("frontmesh", 114, 141, 518, 543, 0.8, 0.6);
columns("frontmesh", 139, 225, 507, 517, 0.55, 0.45);
columns("frontmesh", 140, 225, 544, 553, 0.4, 0.4);
columns("frontmesh", 186, 222, 515, 545, 0.6, 0.4);
columns("frontmesh", 150, 190, 520, 545, 0.12, 0.35);
columns("frontmesh", 240, 368, 507, 553, 0.5, 0.4);
columns("frontmesh", 282, 350, 509, 547, 0.65, 0.55);
columns("frontmesh", 384, 418, 514, 544, 0.8, 0.5);
columns("frontmesh", 386, 500, 507, 517, 0.55, 0.45);
columns("frontmesh", 462, 498, 514, 544, 0.8, 0.5);
columns("frontmesh", 385, 500, 545, 553, 0.35, 0.4);
columns("frontmesh", 425, 460, 518, 540, 0.12, 0.35);
columns("frontmesh", 500, 519, 515, 547, 0.9, 0.45);
columns("frontmesh", 520, 584, 510, 550, 0.3, 0.35);
columns("rightmesh", 645, 658, 516, 546, 0.7, 0.35);
columns("rightmesh", 660, 712, 506, 554, 0.35, 0.35);
columns("rightmesh", 716, 784, 506, 554, 0.55, 0.45);
columns("rightmesh", 732, 764, 508, 551, 0.75, 0.55);
columns("rightmesh", 782, 925, 506, 554, 0.4, 0.35);
columns("rightmesh", 872, 914, 509, 549, 0.65, 0.45);
columns("rightmesh", 920, 980, 506, 521, 0.55, 0.45);
columns("rightmesh", 925, 980, 542, 554, 0.35, 0.35);
columns("rightmesh", 974, 1072, 506, 554, 0.65, 0.5);
columns("rightmesh", 1072, 1122, 507, 553, 0.35, 0.35);
columns("rightmesh", 1120, 1138, 515, 547, 0.8, 0.4);

// Perspective: short vertical gaps on the walls of each ring.
function walls(x0, x1, yTop, depth, n, opacity) {
  let d = "";
  for (let k = 0; k < n; k++) {
    const x = x0 + rnd() * (x1 - x0), u = (x - x0) / (x1 - x0);
    const y = yTop(u) + rnd() * depth;
    d += `M${Math.round(x)}.5 ${Math.round(y)}v${1 + Math.floor(rnd() * 2.4)}`;
  }
  add("perspmesh", d, opacity, crisp);
}
walls(764, 822, u => 300 - 9 * Math.abs(u - 0.5), 15, 170, 0.28);
walls(756, 830, u => 276 - 10 * Math.sin(u * 3), 5, 30, 0.2);
walls(867, 912, u => 301 - 7 * u, 22, 190, 0.6);
walls(887, 932, u => 263 + 1 * u, 17, 170, 0.5);
walls(872, 895, u => 275 - 4 * u, 6, 45, 0.6);
walls(887, 970, u => 340 + 14 * Math.sin(u * 3.14), 17, 380, 0.32);
walls(912, 955, u => 306 + 6 * u, 8, 70, 0.35);
walls(970, 998, u => 309 - 6 * u, 6, 60, 0.35);
```
